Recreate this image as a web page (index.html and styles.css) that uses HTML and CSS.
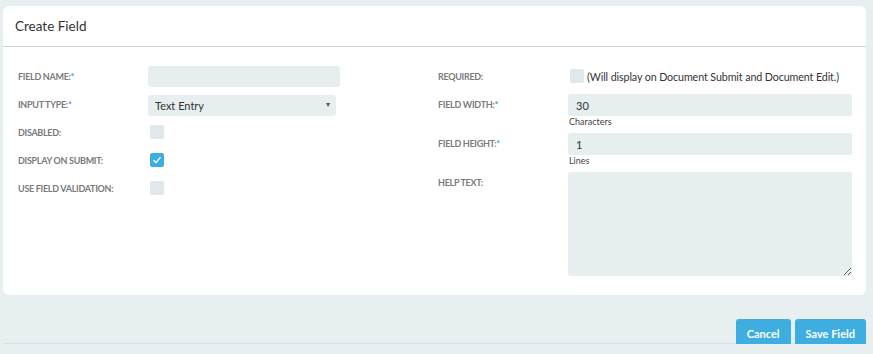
FILE: index.html
```
<!DOCTYPE html>
<html lang="en">
<head>
    <meta charset="UTF-8">
    <meta name="viewport" content="width=device-width, initial-scale=1.0">
    <title>Create Field</title>
    <link rel="stylesheet" href="styles.css">
</head>
<body>
    <div class="card">
        <div class="card-header">Create Field</div>
        <div class="card-body">
            <div class="col left">
                <div class="row">
                    <label class="lbl">Field Name:<span class="req">*</span></label>
                    <input class="txt name" type="text">
                </div>
                <div class="row">
                    <label class="lbl">Input Type:<span class="req">*</span></label>
                    <div class="select-wrap">
                        <select class="sel">
                            <option>Text Entry</option>
                        </select>
                        <span class="arrow">&#9662;</span>
                    </div>
                </div>
                <div class="row">
                    <label class="lbl">Disabled:</label>
                    <span class="chk"></span>
                </div>
                <div class="row">
                    <label class="lbl">Display on Submit:</label>
                    <span class="chk on">
                        <svg width="14" height="14" viewBox="0 0 14 14"><path d="M3.5 7.3 L6 9.6 L10.6 4.2" fill="none" stroke="#fff" stroke-width="1.3"/></svg>
                    </span>
                </div>
                <div class="row">
                    <label class="lbl">Use Field Validation:</label>
                    <span class="chk"></span>
                </div>
            </div>

            <div class="col right">
                <div class="row">
                    <label class="lbl">Required:</label>
                    <span class="chk"></span>
                    <span class="note">(Will display on Document Submit and Document Edit.)</span>
                </div>
                <div class="row top first">
                    <label class="lbl">Field Width:<span class="req">*</span></label>
                    <div class="ctrl">
                        <input class="txt wide" type="text" value="30">
                        <div class="hint">Characters</div>
                    </div>
                </div>
                <div class="row top">
                    <label class="lbl">Field Height:<span class="req">*</span></label>
                    <div class="ctrl">
                        <input class="txt wide" type="text" value="1">
                        <div class="hint">Lines</div>
                    </div>
                </div>
                <div class="row top">
                    <label class="lbl">Help Text:</label>
                    <div class="ctrl">
                        <textarea class="area"></textarea>
                    </div>
                </div>
            </div>
        </div>
    </div>

    <div class="footer">
        <button class="btn">Cancel</button>
        <button class="btn">Save Field</button>
    </div>
</body>
</html>
```

FILE: styles.css
```
body {
    font-family: Lato, "Open Sans", sans-serif;
    background-color: #e8eff1;
    margin: 0;
    padding: 6px 7px 0 3px;
    color: #444;
}

.card {
    background-color: #fff;
    border-radius: 6px;
}

.card-header {
    height: 40px;
    line-height: 40px;
    padding-left: 12px;
    font-size: 13.5px;
    color: #333;
    border-bottom: 1px solid #c9d3d7;
}

.card-body {
    display: flex;
    padding: 15px 14px 19px 15px;
}

.col.left {
    width: 420px;
}

.col.right {
    flex: 1;
}

.row {
    display: flex;
    align-items: center;
    height: 28px;
}

.row.top {
    align-items: flex-start;
    height: auto;
    margin-top: 5px;
}

.row.first {
    margin-top: 4px;
}

.lbl {
    width: 130px;
    flex-shrink: 0;
    font-size: 9px;
    font-weight: bold;
    letter-spacing: -0.3px;
    text-transform: uppercase;
    color: #7a7a7a;
}

.row.top .lbl {
    padding-top: 5px;
}

.req {
    color: #3a9fd3;
}

.txt {
    box-sizing: border-box;
    height: 21px;
    border: none;
    border-radius: 3px;
    background-color: #e6eef0;
    padding: 0 8px;
    font-family: inherit;
    font-size: 11px;
    color: #333;
    outline: none;
}

.txt.name {
    width: 192px;
}

.txt.wide {
    width: 284px;
    height: 22px;
}

.ctrl {
    display: flex;
    flex-direction: column;
}

.hint {
    font-size: 9px;
    color: #444;
    height: 12px;
    line-height: 12px;
    padding-left: 1px;
}

.select-wrap {
    position: relative;
    width: 188px;
    height: 21px;
}

.sel {
    appearance: none;
    -webkit-appearance: none;
    width: 100%;
    height: 21px;
    border: none;
    border-radius: 3px;
    background-color: #e6eef0;
    padding: 0 7px;
    font-family: inherit;
    font-size: 11px;
    color: #333;
    outline: none;
}

.arrow {
    position: absolute;
    right: 6px;
    top: 5px;
    font-size: 8px;
    color: #555;
    pointer-events: none;
}

.chk {
    display: inline-block;
    width: 14px;
    height: 14px;
    margin-left: 2px;
    border-radius: 2px;
    background-color: #e1e8eb;
}

.chk.on {
    background-color: #3daee0;
}

.chk svg {
    display: block;
}

.note {
    margin-left: 3px;
    font-size: 10.7px;
    letter-spacing: -0.1px;
    color: #333;
}

.area {
    box-sizing: border-box;
    width: 284px;
    height: 104px;
    border: none;
    border-radius: 3px;
    background-color: #e6eef0;
    font-family: inherit;
    outline: none;
}

.footer {
    display: flex;
    justify-content: flex-end;
    align-items: flex-start;
    gap: 4px;
    margin-top: 24px;
    height: 24px;
    border-bottom: 1px solid #d8e0e3;
}

.btn {
    flex-shrink: 0;
    height: 28px;
    padding: 0 11px;
    border: none;
    border-radius: 3px;
    background-color: #3eaee0;
    color: #fff;
    font-family: inherit;
    font-size: 11px;
    font-weight: bold;
    cursor: pointer;
}
```
